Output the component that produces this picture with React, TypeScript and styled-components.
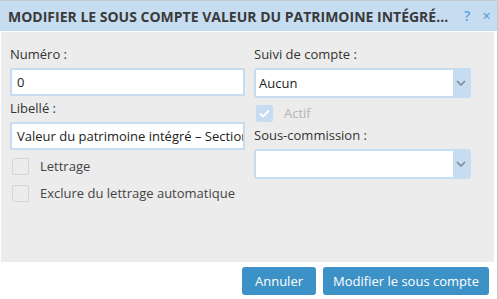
import React from "react";
import styled, { createGlobalStyle } from "styled-components";

const Global = createGlobalStyle`
  html, body { margin: 0; padding: 0; background: #fff; }
  body { font-family: "Open Sans", "Noto Sans", sans-serif; color: #333; }
  * { box-sizing: border-box; }
`;

const Window = styled.div`
  width: 498px;
  height: 299px;
  border-right: 1px solid #c8c8c8;
  border-top: 1px solid #c8c8c8;
  background: #fff;
  display: flex;
  flex-direction: column;
  overflow: hidden;
`;

const Header = styled.div`
  height: 30px;
  background: #c6dcf0;
  display: flex;
  align-items: center;
  padding: 0 0 0 8px;
`;

const Title = styled.div`
  width: 442px;
  font-size: 14px;
  font-weight: 700;
  color: #3a3a3a;
  white-space: nowrap;
  overflow: hidden;
  text-overflow: ellipsis;
`;

const HeaderIcon = styled.span<{ $ml: number }>`
  display: inline-block;
  margin-left: ${(p) => p.$ml}px;
  color: #5aa3dc;
  font-size: 14px;
  font-weight: 600;
  line-height: 16px;
`;

const Panel = styled.div`
  margin: 1px 3px 0 1px;
  height: 230px;
  background: #ececec;
  padding: 13px 24px 0 9px;
  display: grid;
  grid-template-columns: 235px 217px;
  column-gap: 9px;
`;

const Column = styled.div`
  display: flex;
  flex-direction: column;
`;

const Label = styled.div<{ $mt?: number }>`
  font-size: 13px;
  line-height: 18px;
  color: #333;
  margin-top: ${(p) => p.$mt ?? 0}px;
  margin-bottom: 5px;
`;

const TextInput = styled.div`
  height: 28px;
  background: #fff;
  border: 2px solid #c6dcf0;
  display: flex;
  align-items: center;
  padding: 0 5px;
  font-size: 13px;
  color: #222;
  white-space: nowrap;
  overflow: hidden;
`;

const Select = styled.div`
  height: 30px;
  background: #c6dcf0;
  border-radius: 3px;
  padding: 2px;
  display: flex;
`;

const SelectValue = styled.div`
  width: 197px;
  background: #fff;
  display: flex;
  align-items: center;
  padding: 0 3px;
  font-size: 13px;
  color: #222;
`;

const SelectArrow = styled.div`
  flex: 1;
  display: flex;
  align-items: center;
  justify-content: center;
`;

const CheckRow = styled.div<{ $mt?: number }>`
  display: flex;
  align-items: center;
  margin-top: ${(p) => p.$mt ?? 0}px;
  padding-left: 2px;
`;

const Box = styled.div<{ $checked?: boolean }>`
  width: 17px;
  height: 17px;
  border-radius: 2px;
  border: 1px solid ${(p) => (p.$checked ? "#c6dcf0" : "#d6d6d6")};
  background: ${(p) => (p.$checked ? "#c6dcf0" : "#ececec")};
  display: flex;
  align-items: center;
  justify-content: center;
  margin-right: 11px;
`;

const CheckText = styled.span<{ $disabled?: boolean }>`
  font-size: 13px;
  color: ${(p) => (p.$disabled ? "#b5b5b5" : "#444")};
`;

const Footer = styled.div`
  flex: 1;
  display: flex;
  justify-content: flex-end;
  align-items: flex-start;
  padding: 5px 8px 0 0;
  gap: 7px;
`;

const Button = styled.button<{ $w: number }>`
  width: ${(p) => p.$w}px;
  height: 28px;
  border: none;
  border-radius: 3px;
  background: #3c91c7;
  color: #fff;
  font-family: inherit;
  font-size: 13px;
  padding: 0;
`;

const Chevron = () => (
  <svg width="10" height="6" viewBox="0 0 10 6">
    <path d="M1 1 L5 5 L9 1" fill="none" stroke="#7d8a96" strokeWidth="1.6" />
  </svg>
);

const Check = () => (
  <svg width="11" height="9" viewBox="0 0 11 9">
    <path d="M1 4.5 L4 7.5 L10 1.5" fill="none" stroke="#fff" strokeWidth="1.8" />
  </svg>
);

export default function App() {
  return (
    <>
      <Global />
      <Window>
        <Header>
          <Title>MODIFIER LE SOUS COMPTE VALEUR DU PATRIMOINE INTÉGRÉ – SECTION</Title>
          <HeaderIcon $ml={14}>?</HeaderIcon>
          <HeaderIcon $ml={12}>×</HeaderIcon>
        </Header>
        <Panel>
          <Column>
            <Label>Numéro :</Label>
            <TextInput>0</TextInput>
            <Label $mt={3}>Libellé :</Label>
            <TextInput>Valeur du patrimoine intégré – Section</TextInput>
            <CheckRow $mt={7}>
              <Box />
              <CheckText>Lettrage</CheckText>
            </CheckRow>
            <CheckRow $mt={9}>
              <Box />
              <CheckText>Exclure du lettrage automatique</CheckText>
            </CheckRow>
          </Column>
          <Column>
            <Label>Suivi de compte :</Label>
            <Select>
              <SelectValue>Aucun</SelectValue>
              <SelectArrow>
                <Chevron />
              </SelectArrow>
            </Select>
            <CheckRow $mt={6}>
              <Box $checked>
                <Check />
              </Box>
              <CheckText $disabled>Actif</CheckText>
            </CheckRow>
            <Label $mt={4}>Sous-commission :</Label>
            <Select>
              <SelectValue />
              <SelectArrow>
                <Chevron />
              </SelectArrow>
            </Select>
          </Column>
        </Panel>
        <Footer>
          <Button $w={74}>Annuler</Button>
          <Button $w={166}>Modifier le sous compte</Button>
        </Footer>
      </Window>
    </>
  );
}
